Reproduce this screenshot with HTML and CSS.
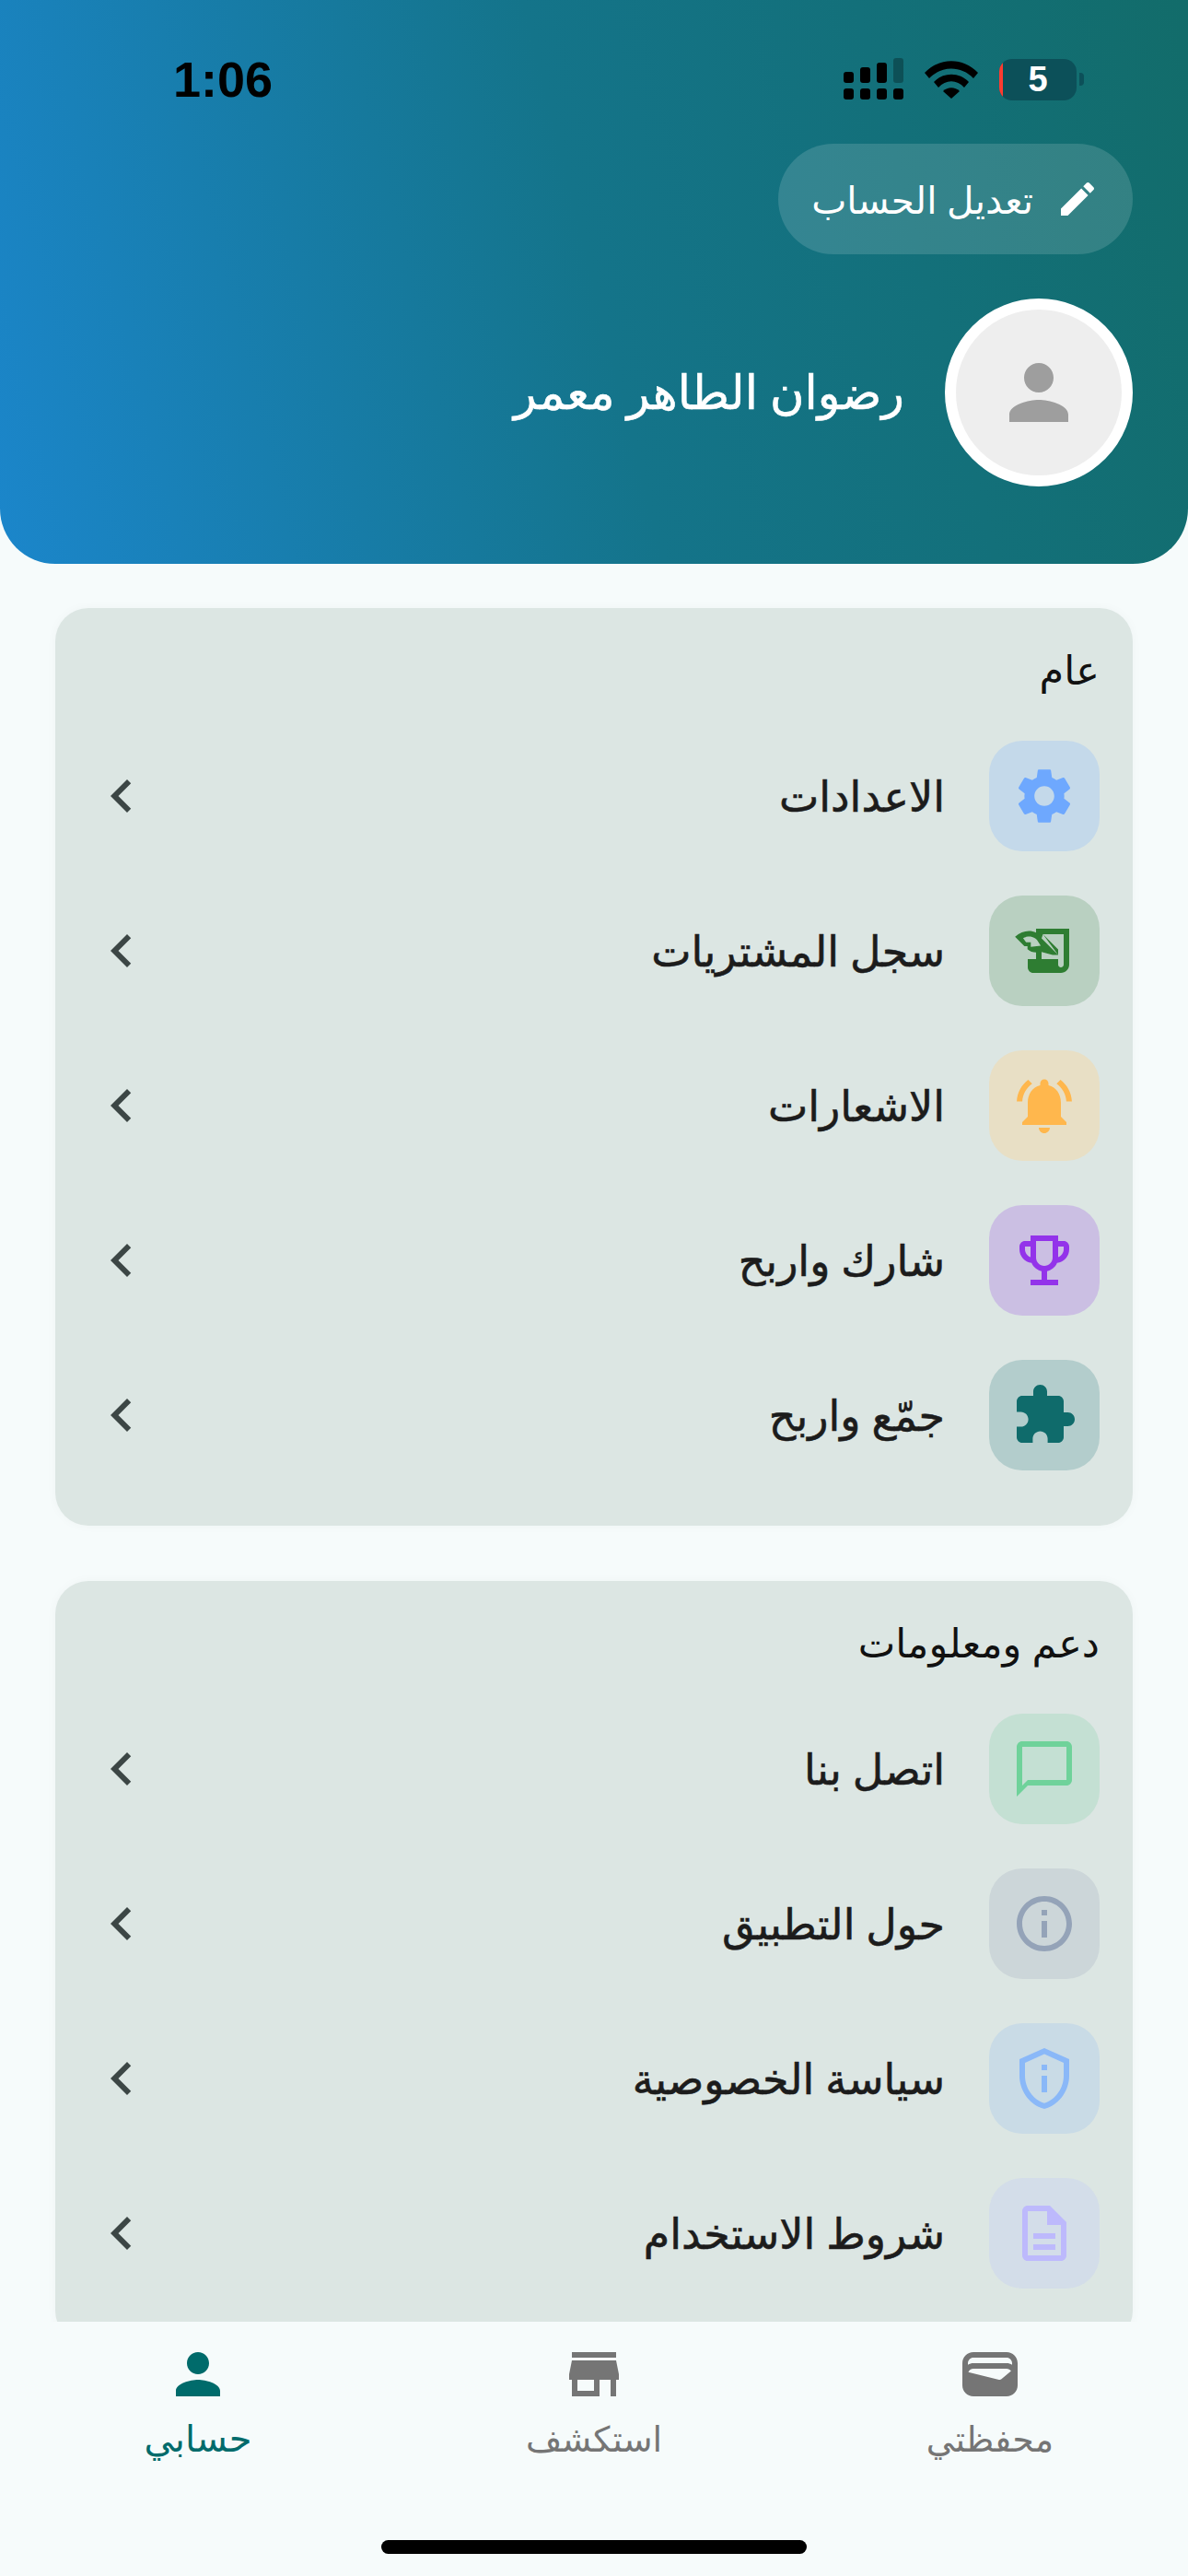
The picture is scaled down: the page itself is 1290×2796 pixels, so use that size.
FILE: index.html
```html
<!DOCTYPE html>
<html lang="ar" dir="rtl">
<head>
  <meta charset="UTF-8">
  <meta name="viewport" content="width=device-width, initial-scale=1.0">
  <title>حسابي</title>
  <link rel="stylesheet" href="styles.css">
</head>
<body>
  <div class="screen">
    <header class="header">
      <div class="status-bar">
        <span class="time">1:06</span>
        <div class="status-icons">
          <svg class="signal" width="65" height="46" viewBox="0 0 65 46">
            <rect x="0" y="15" width="11" height="12" rx="3"/>
            <rect x="18" y="10" width="11" height="17" rx="3"/>
            <rect x="36" y="5" width="11" height="22" rx="3"/>
            <rect x="54" y="0" width="11" height="27" rx="3" class="signal-off"/>
            <rect x="0" y="33" width="11" height="12" rx="3"/>
            <rect x="18" y="33" width="11" height="12" rx="3"/>
            <rect x="36" y="33" width="11" height="12" rx="3"/>
            <rect x="54" y="33" width="11" height="12" rx="3"/>
          </svg>
          <svg class="wifi" width="58" height="42" viewBox="0 0 58 42">
            <path d="M0 14C16-3 42-3 58 14L53 20C40 6 18 6 5 20Z"/>
            <path d="M10 24C20 13 38 13 48 24L43 30C35 21 23 21 15 30Z"/>
            <path d="M20 34C25 29 33 29 38 34L29 42Z"/>
          </svg>
          <div class="battery">
            <span class="battery-low"></span>
            <span class="battery-num">5</span>
          </div>
          <span class="battery-nub"></span>
        </div>
      </div>

      <button class="edit-btn">
        <svg class="icon-48" viewBox="0 0 24 24"><path d="M3 17.25V21h3.75L17.81 9.94l-3.75-3.75L3 17.25zM20.71 7.04c.39-.39.39-1.02 0-1.41l-2.34-2.34c-.39-.39-1.02-.39-1.41 0l-1.83 1.83 3.75 3.75 1.83-1.83z"/></svg>
        <span>تعديل الحساب</span>
      </button>

      <div class="profile">
        <div class="avatar">
          <svg class="icon-96" viewBox="0 0 24 24"><path d="M12 12c2.21 0 4-1.79 4-4s-1.79-4-4-4-4 1.79-4 4 1.79 4 4 4zm0 2c-2.67 0-8 1.34-8 4v2h16v-2c0-2.66-5.33-4-8-4z"/></svg>
        </div>
        <h1 class="name">رضوان الطاهر معمر</h1>
      </div>
    </header>

    <main class="content">
      <section class="card">
        <h2 class="card-title">عام</h2>
        <a class="row">
          <span class="row-icon tint-blue"><svg class="icon-72" viewBox="0 0 24 24"><path d="M19.14 12.94c.04-.3.06-.61.06-.94 0-.32-.02-.64-.07-.94l2.03-1.58c.18-.14.23-.41.12-.61l-1.92-3.32c-.12-.22-.37-.29-.59-.22l-2.39.96c-.5-.38-1.03-.7-1.62-.94l-.36-2.54c-.04-.24-.24-.41-.48-.41h-3.84c-.24 0-.43.17-.47.41l-.36 2.54c-.59.24-1.13.57-1.62.94l-2.39-.96c-.22-.08-.47 0-.59.22L2.74 8.87c-.12.21-.08.47.12.61l2.03 1.58c-.05.3-.09.63-.09.94s.02.64.07.94l-2.03 1.58c-.18.14-.23.41-.12.61l1.92 3.32c.12.22.37.29.59.22l2.39-.96c.5.38 1.03.7 1.62.94l.36 2.54c.05.24.24.41.48.41h3.84c.24 0 .44-.17.47-.41l.36-2.54c.59-.24 1.13-.56 1.62-.94l2.39.96c.22.08.47 0 .59-.22l1.92-3.32c.12-.22.07-.47-.12-.61l-2.01-1.58zM12 15.6c-1.98 0-3.6-1.62-3.6-3.6s1.62-3.6 3.6-3.6 3.6 1.62 3.6 3.6-1.62 3.6-3.6 3.6z"/></svg></span>
          <span class="row-label">الاعدادات</span>
          <svg class="chevron" viewBox="0 0 24 24"><path d="M15.41 7.41L14 6l-6 6 6 6 1.41-1.41L10.83 12z"/></svg>
        </a>
        <a class="row">
          <span class="row-icon tint-green"><svg class="icon-72" viewBox="0 0 24 24"><path fill-rule="evenodd" d="M9 4H21V17c0 1.66-1.34 3-3 3H8c-1.1 0-2-.9-2-2V15H9V12.6C7.9 12.6 6.7 12.2 5.9 11.4V10.3H4.8L1.4 6.9C3.8 4.7 6.800 4.300 9 5.400ZM11.500 6 17 11.500V13.500L11 7.500ZM11.500 6H19V17c0 .55-.45 1-1 1s-1-.45-1-1V15H11V12.400L15 13.500 17 13.500ZM4.300 7.400C6.300 6.400 8.100 6.800 9.300 8L10.700 10.200 7.100 10.600V8.900H5.400Z"/></svg></span>
          <span class="row-label">سجل المشتريات</span>
          <svg class="chevron" viewBox="0 0 24 24"><path d="M15.41 7.41L14 6l-6 6 6 6 1.41-1.41L10.83 12z"/></svg>
        </a>
        <a class="row">
          <span class="row-icon tint-amber"><svg class="icon-72" viewBox="0 0 24 24"><path d="M7.58 4.08L6.15 2.65C3.75 4.48 2.17 7.3 2.03 10.5h2c.15-2.65 1.51-4.97 3.55-6.42zm12.39 6.42h2c-.15-3.2-1.73-6.02-4.12-7.85l-1.42 1.43c2.02 1.45 3.39 3.77 3.54 6.42zM18 11c0-3.07-1.64-5.64-4.5-6.32V4c0-.83-.67-1.5-1.5-1.5s-1.5.67-1.5 1.5v.68C7.63 5.36 6 7.92 6 11v5l-2 2v1h16v-1l-2-2v-5zm-6 11c.14 0 .27-.01.4-.04.65-.14 1.18-.58 1.44-1.18.1-.24.15-.5.15-.78h-4c.01 1.1.9 2 2.01 2z"/></svg></span>
          <span class="row-label">الاشعارات</span>
          <svg class="chevron" viewBox="0 0 24 24"><path d="M15.41 7.41L14 6l-6 6 6 6 1.41-1.41L10.83 12z"/></svg>
        </a>
        <a class="row">
          <span class="row-icon tint-purple"><svg class="icon-72" viewBox="0 0 24 24"><path d="M19 5h-2V3H7v2H5c-1.1 0-2 .9-2 2v1c0 2.55 1.92 4.63 4.39 4.94.63 1.5 1.98 2.63 3.61 2.96V19H7v2h10v-2h-4v-3.1c1.63-.33 2.98-1.46 3.61-2.96C19.08 12.63 21 10.55 21 8V7c0-1.1-.9-2-2-2zM5 8V7h2v3.82C5.84 10.4 5 9.3 5 8zm7 6c-1.65 0-3-1.35-3-3V5h6v6c0 1.65-1.35 3-3 3zm7-6c0 1.3-.84 2.4-2 2.82V7h2v1z"/></svg></span>
          <span class="row-label">شارك واربح</span>
          <svg class="chevron" viewBox="0 0 24 24"><path d="M15.41 7.41L14 6l-6 6 6 6 1.41-1.41L10.83 12z"/></svg>
        </a>
        <a class="row">
          <span class="row-icon tint-teal"><svg class="icon-72" viewBox="0 0 24 24"><path d="M20.5 11H19V7c0-1.1-.9-2-2-2h-4V3.500C13 2.120 11.880 1 10.500 1S8 2.120 8 3.500V5H4c-1.100 0-1.990.9-1.990 2v3.800H3.500c1.490 0 2.700 1.210 2.700 2.700s-1.210 2.700-2.700 2.700H2V20c0 1.100.9 2 2 2h3.800v-1.500c0-1.490 1.210-2.700 2.700-2.700 1.490 0 2.700 1.210 2.700 2.700V22H17c1.100 0 2-.9 2-2v-4h1.500c1.380 0 2.500-1.120 2.500-2.500S21.880 11 20.500 11z"/></svg></span>
          <span class="row-label">جمّع واربح</span>
          <svg class="chevron" viewBox="0 0 24 24"><path d="M15.41 7.41L14 6l-6 6 6 6 1.41-1.41L10.83 12z"/></svg>
        </a>
      </section>

      <section class="card">
        <h2 class="card-title">دعم ومعلومات</h2>
        <a class="row">
          <span class="row-icon tint-mint"><svg class="icon-72" viewBox="0 0 24 24"><path d="M20 2H4c-1.100 0-2 .9-2 2v18l4-4h14c1.100 0 2-.9 2-2V4c0-1.100-.9-2-2-2zm0 14H6l-2 2V4h16v12z"/></svg></span>
          <span class="row-label">اتصل بنا</span>
          <svg class="chevron" viewBox="0 0 24 24"><path d="M15.41 7.41L14 6l-6 6 6 6 1.41-1.41L10.83 12z"/></svg>
        </a>
        <a class="row">
          <span class="row-icon tint-slate"><svg class="icon-72" viewBox="0 0 24 24"><path d="M11 7h2v2h-2zm0 4h2v6h-2zm1-9C6.480 2 2 6.480 2 12s4.480 10 10 10 10-4.480 10-10S17.520 2 12 2zm0 18c-4.410 0-8-3.590-8-8s3.590-8 8-8 8 3.590 8 8-3.590 8-8 8z"/></svg></span>
          <span class="row-label">حول التطبيق</span>
          <svg class="chevron" viewBox="0 0 24 24"><path d="M15.41 7.41L14 6l-6 6 6 6 1.41-1.41L10.83 12z"/></svg>
        </a>
        <a class="row">
          <span class="row-icon tint-sky"><svg class="icon-72" viewBox="0 0 24 24"><path d="M12 3.190l7 3.110V11c0 4.520-2.980 8.690-7 9.930-4.020-1.240-7-5.410-7-9.930V6.300l7-3.110M12 1L3 5v6c0 5.550 3.840 10.740 9 12 5.160-1.260 9-6.450 9-12V5l-9-4zm-1 6h2v2h-2zm0 4h2v6h-2z"/></svg></span>
          <span class="row-label">سياسة الخصوصية</span>
          <svg class="chevron" viewBox="0 0 24 24"><path d="M15.41 7.41L14 6l-6 6 6 6 1.41-1.41L10.83 12z"/></svg>
        </a>
        <a class="row">
          <span class="row-icon tint-lavender"><svg class="icon-72" viewBox="0 0 24 24"><path d="M8 16h8v2H8zm0-4h8v2H8zm6-10H6c-1.100 0-2 .9-2 2v16c0 1.100.89 2 1.990 2H18c1.100 0 2-.9 2-2V8l-6-6zm4 18H6V4h7v5h5v11z"/></svg></span>
          <span class="row-label">شروط الاستخدام</span>
          <svg class="chevron" viewBox="0 0 24 24"><path d="M15.41 7.41L14 6l-6 6 6 6 1.41-1.41L10.83 12z"/></svg>
        </a>
      </section>
    </main>

    <nav class="tabbar">
      <div class="tabs">
        <a class="tab">
          <svg class="icon-72" viewBox="0 0 24 24"><path d="M18 4H6C3.790 4 2 5.790 2 8v8c0 2.210 1.790 4 4 4h12c2.210 0 4-1.790 4-4V8c0-2.210-1.790-4-4-4zm-1.860 9.770c-.24.2-.57.28-.88.2L4.150 11.250C4.450 10.520 5.160 10 6 10h12c.67 0 1.260.34 1.630.84l-3.490 2.930zM6 6h12c1.100 0 2 .9 2 2v.55c-.59-.34-1.270-.55-2-.55H6c-.73 0-1.410.21-2 .55V8c0-1.100.9-2 2-2z"/></svg>
          <span>محفظتي</span>
        </a>
        <a class="tab">
          <svg class="icon-72" viewBox="0 0 24 24"><path d="M20 4H4v2h16V4zm1 10v-2l-1-5H4l-1 5v2h1v6h10v-6h4v6h2v-6h1zm-9 4H6v-4h6v4z"/></svg>
          <span>استكشف</span>
        </a>
        <a class="tab active">
          <svg class="icon-72" viewBox="0 0 24 24"><path d="M12 12c2.210 0 4-1.790 4-4s-1.790-4-4-4-4 1.790-4 4 1.790 4 4 4zm0 2c-2.670 0-8 1.340-8 4v2h16v-2c0-2.660-5.330-4-8-4z"/></svg>
          <span>حسابي</span>
        </a>
      </div>
      <div class="home-bar"></div>
    </nav>
  </div>
</body>
</html>
```

FILE: styles.css
```css
* {
  box-sizing: border-box;
}

html, body {
  margin: 0;
  padding: 0;
}

body {
  font-family: "Noto Sans", "DejaVu Sans", sans-serif;
  background-color: #f6fbfb;
}

h1, h2 {
  margin: 0;
  font-weight: 400;
}

svg {
  display: block;
  fill: currentColor;
}

.icon-48 { width: 48px; height: 48px; }
.icon-72 { width: 72px; height: 72px; }
.icon-96 { width: 96px; height: 96px; }

.screen {
  position: relative;
  width: 1290px;
  height: 2796px;
  overflow: hidden;
  background-color: #f6fbfb;
}

/* header */
.header {
  height: 612px;
  padding: 56px 60px 0;
  border-radius: 0 0 60px 60px;
  background: linear-gradient(256deg, #126c6a 0%, #14748a 50%, #1b86cb 100%);
  color: white;
}

.status-bar {
  direction: ltr;
  display: flex;
  justify-content: space-between;
  align-items: center;
  height: 60px;
  padding-left: 128px;
  padding-right: 53px;
  color: black;
}

.time {
  font-family: "Liberation Sans", sans-serif;
  font-weight: 700;
  font-size: 54px;
}

.status-icons {
  display: flex;
  align-items: center;
}

.signal { margin-right: 23px; }
.signal-off { fill: rgba(0, 0, 0, 0.28); }
.wifi { margin-right: 23px; }

.battery {
  position: relative;
  width: 84px;
  height: 45px;
  border-radius: 14px;
  overflow: hidden;
  background-color: #0c5059;
  display: flex;
  align-items: center;
  justify-content: center;
}

.battery-low {
  position: absolute;
  left: 0;
  top: 0;
  bottom: 0;
  width: 4px;
  background-color: #ff3b30;
}

.battery-num {
  font-family: "Liberation Sans", sans-serif;
  font-weight: 700;
  font-size: 38px;
  color: white;
}

.battery-nub {
  width: 5px;
  height: 14px;
  margin-left: 3px;
  border-radius: 0 4px 4px 0;
  background-color: #0c5059;
}

.edit-btn {
  display: flex;
  align-items: center;
  gap: 24px;
  height: 120px;
  margin-top: 40px;
  padding: 0 36px;
  border: none;
  border-radius: 60px;
  background-color: rgba(255, 255, 255, 0.14);
  color: white;
  font-family: inherit;
  font-size: 40.5px;
}

.profile {
  display: flex;
  align-items: center;
  gap: 44px;
  margin-top: 48px;
}

.avatar {
  width: 204px;
  height: 204px;
  border: 12px solid white;
  border-radius: 50%;
  background-color: #eeeeee;
  color: #9e9e9e;
  display: flex;
  align-items: center;
  justify-content: center;
}

.name {
  font-size: 51px;
  margin-top: -4px;
  -webkit-text-stroke: 0.6px currentColor;
}

/* cards */
.content {
  padding: 48px 60px 0;
}

.card {
  padding: 36px;
  margin-bottom: 60px;
  border-radius: 36px;
  background-color: #dce6e3;
  box-shadow: 0 0 12px rgba(0, 0, 0, 0.03);
}

.card-title {
  height: 84px;
  line-height: 62px;
  font-size: 43px;
  color: #111;
}

.row {
  display: flex;
  align-items: center;
  gap: 48px;
  height: 168px;
}

.row-icon {
  width: 120px;
  height: 120px;
  border-radius: 36px;
  display: flex;
  align-items: center;
  justify-content: center;
}

.row-label {
  flex: 1;
  font-size: 46px;
  margin-top: -3px;
  color: #1c1c1c;
  -webkit-text-stroke: 0.6px currentColor;
}

.chevron {
  width: 72px;
  height: 72px;
  color: #3c4645;
}

.tint-blue { background-color: #c4d9ea; color: #6ea8fe; }
.tint-green { background-color: #b9d0c1; color: #2e7d32; }
.tint-amber { background-color: #e8dfc5; color: #ffb74d; }
.tint-purple { background-color: #cbbfe3; color: #9333ea; }
.tint-teal { background-color: #b3cdcc; color: #0f6b6b; }
.tint-mint { background-color: #c4e0d3; color: #6fd29a; }
.tint-slate { background-color: #ccd6d9; color: #94a3b8; }
.tint-sky { background-color: #c9dbe6; color: #8ab8f8; }
.tint-lavender { background-color: #d3dde9; color: #bdb9fc; }

/* bottom nav, sits over the second card */
.tabbar {
  position: absolute;
  left: 0;
  right: 0;
  bottom: 0;
  height: 276px;
  padding-top: 21px;
  background-color: #f6fbfb;
}

.tabs {
  display: flex;
}

.tab {
  width: 430px;
  display: flex;
  flex-direction: column;
  align-items: center;
  color: #757575;
  font-size: 38px;
  line-height: 60px;
}

.tab span {
  margin-top: 3px;
}

.tab.active {
  color: #006b6b;
  font-size: 40px;
}

.home-bar {
  width: 462px;
  height: 15px;
  margin: 81px auto 0;
  border-radius: 8px;
  background-color: black;
}
```
